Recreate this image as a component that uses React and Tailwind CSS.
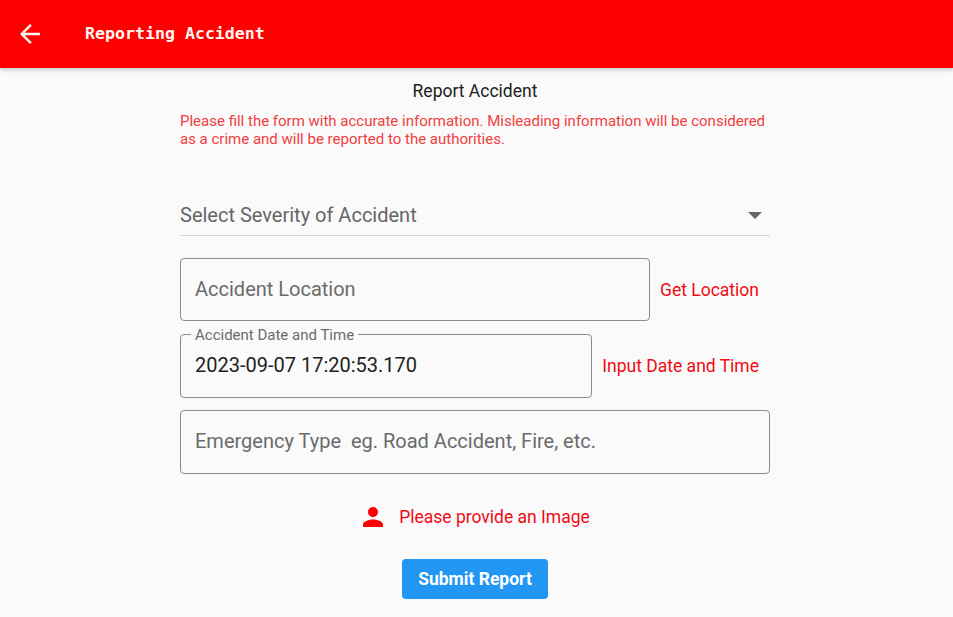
import { useState } from "react";

function ArrowBack() {
  return (
    <svg viewBox="0 0 24 24" className="w-[30px] h-[30px] fill-[#fff5f0]">
      <path d="M20 11H7.83l5.59-5.59L12 4l-8 8 8 8 1.41-1.41L7.83 13H20v-2z" />
    </svg>
  );
}

function PersonIcon() {
  return (
    <svg viewBox="0 0 24 24" className="w-[30px] h-[30px] fill-[#ff0000]">
      <path d="M12 12c2.21 0 4-1.79 4-4s-1.79-4-4-4-4 1.79-4 4 1.79 4 4 4zm0 2c-2.67 0-8 1.34-8 4v2h16v-2c0-2.66-5.33-4-8-4z" />
    </svg>
  );
}

export default function App() {
  const [dateTime] = useState("2023-09-07 17:20:53.170");

  return (
    <div className="w-[953px] h-[617px] overflow-hidden bg-[#fafafa] font-['Roboto',sans-serif]">
      {/* App bar */}
      <div className="h-[68px] bg-[#ff0000] flex items-center pl-[15px] shadow-[0_2px_4px_rgba(0,0,0,0.2)]">
        <ArrowBack />
        <span className="ml-[40px] font-['DejaVu_Sans_Mono',monospace] font-bold text-[16.6px] text-[#fff5f0]">
          Reporting Accident
        </span>
      </div>

      <div className="w-[590px] ml-[180px]">
        <p className="mt-[11px] h-[24px] leading-[24px] text-center text-[17.5px] text-[#212121]">Report Accident</p>
        <p className="mt-[9px] text-[15px] leading-[18px] text-[#f04040]">
          Please fill the form with accurate information. Misleading information will be considered as a crime and will be reported to the authorities.
        </p>

        {/* Severity dropdown */}
        <div className="mt-[46px] h-[42px] border-b border-[#d6d6d6] flex items-center justify-between pr-[8px]">
          <span className="text-[20px] text-[#666666]">Select Severity of Accident</span>
          <div className="mt-[2px] w-0 h-0 border-x-[7px] border-x-transparent border-t-[7px] border-t-[#666666]"></div>
        </div>

        <div className="mt-[22px] flex items-center">
          <div className="w-[470px] h-[63px] border border-[#8c8c8c] rounded-[4px] flex items-center px-[14px]">
            <span className="-mt-[2px] text-[20px] text-[#6b6b6b]">Accident Location</span>
          </div>
          <span className="mt-[2px] ml-auto pr-[11px] text-[17.5px] text-[#f00a14]">Get Location</span>
        </div>

        <div className="mt-[13px] flex items-center">
          <div className="relative w-[412px] h-[64px] border border-[#8c8c8c] rounded-[4px] flex items-center px-[14px]">
            <span className="absolute -top-[8px] left-[10px] px-[4px] bg-[#fafafa] text-[15px] leading-[16px] text-[#6b6b6b]">
              Accident Date and Time
            </span>
            <span className="-mt-[2px] text-[20px] text-[#212121]">{dateTime}</span>
          </div>
          <span className="ml-auto pr-[11px] text-[17.5px] text-[#f00a14]">Input Date and Time</span>
        </div>

        <div className="mt-[12px] h-[64px] border border-[#8c8c8c] rounded-[4px] flex items-center px-[14px]">
          <span className="-mt-[2px] text-[20px] text-[#6b6b6b] whitespace-pre">Emergency Type  eg. Road Accident, Fire, etc.</span>
        </div>

        <div className="mt-[29px] h-[28px] flex items-center justify-center gap-[11px]">
          <div className="-ml-[2px]">
            <PersonIcon />
          </div>
          <span className="text-[17.5px] text-[#f00a14]">Please provide an Image</span>
        </div>

        <div className="mt-[28px] flex justify-center">
          <button className="w-[146px] h-[40px] rounded-[4px] bg-[#2196f3] text-white text-[17.5px] font-bold">
            Submit Report
          </button>
        </div>
      </div>
    </div>
  );
}
